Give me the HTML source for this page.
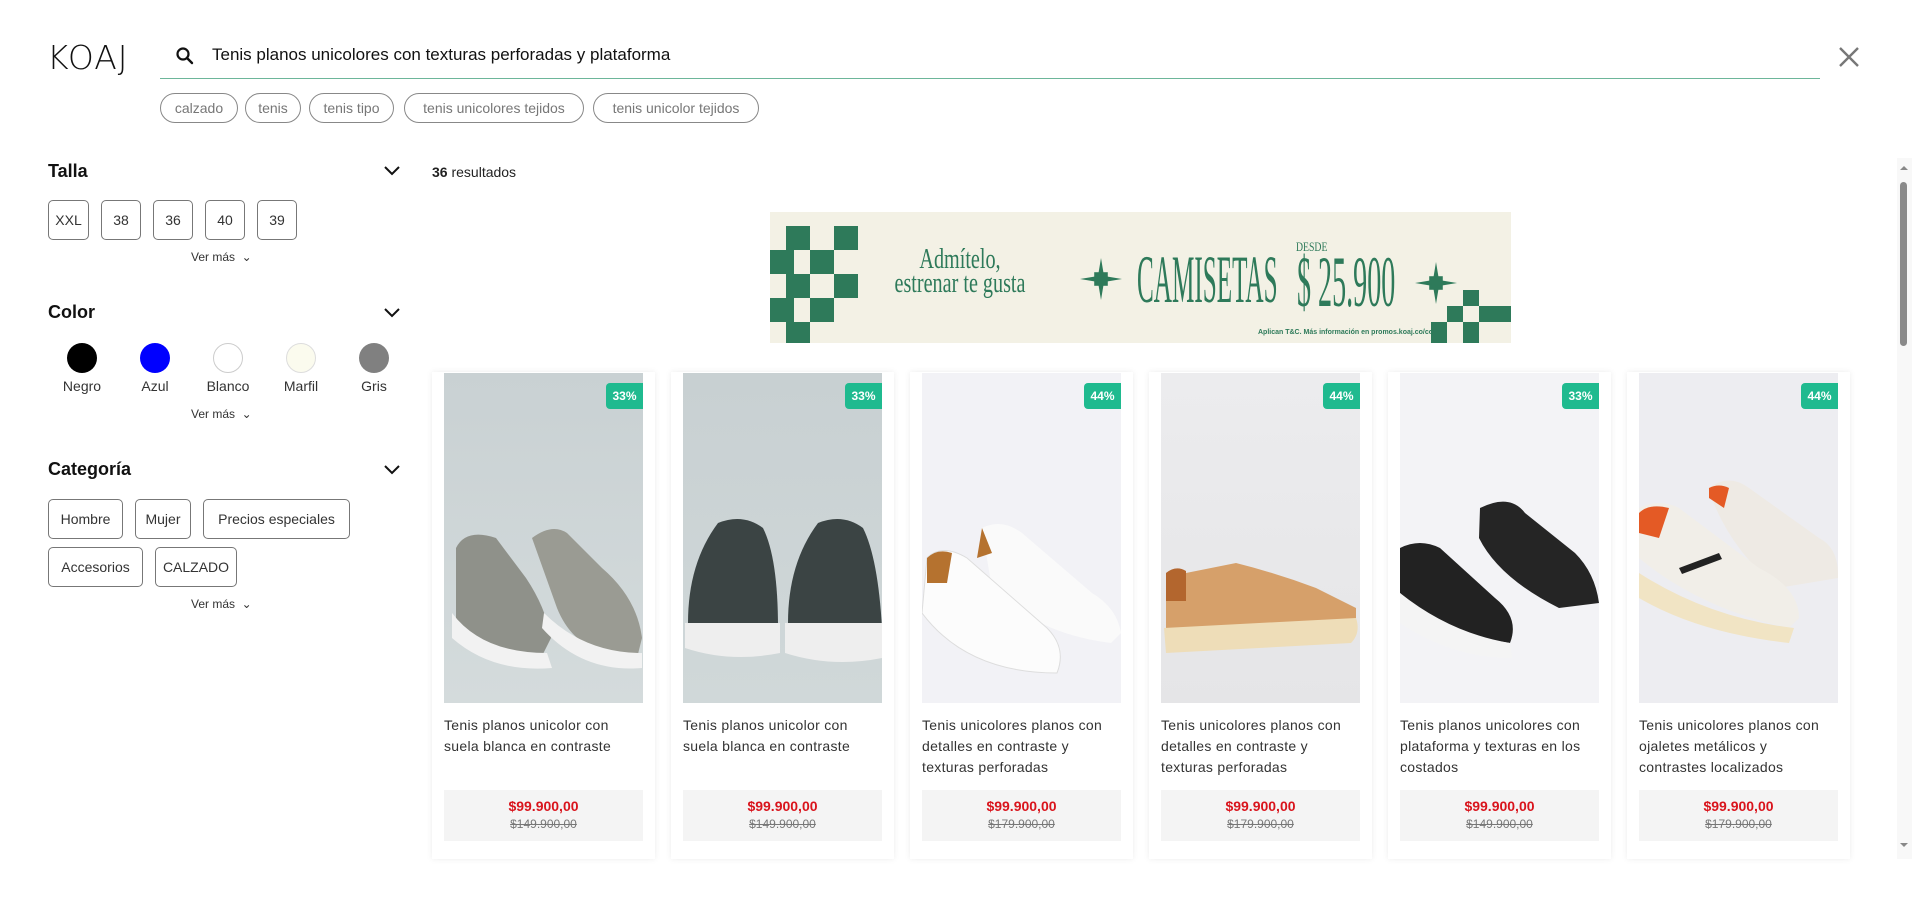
<!DOCTYPE html>
<html><head><meta charset="utf-8"><style>
*{box-sizing:border-box;margin:0;padding:0}
body{width:1912px;height:919px;overflow:hidden;background:#fff;font-family:"Liberation Sans",sans-serif;color:#222;position:relative}
.a{position:absolute}
.logo{left:47px;top:38px;font-size:33px;letter-spacing:1px;color:#111;font-family:"DejaVu Sans","Liberation Sans",sans-serif;font-weight:200}
.q{left:212px;top:45px;font-size:17px;color:#111}
.line{left:160px;top:78px;width:1660px;height:1px;background:#6db69a}
.chip{top:93px;height:30px;border:1px solid #888;border-radius:15px;font-size:14px;color:#777;display:flex;align-items:center;justify-content:center}
h3{position:absolute;left:48px;font-size:18px;font-weight:700;color:#111}
.chev{position:absolute;left:384px}
.box{position:absolute;height:40px;border:1px solid #777;border-radius:5px;font-size:14px;color:#333;display:flex;align-items:center;justify-content:center}
.vm{position:absolute;left:191px;font-size:12px;color:#333}
.dot{position:absolute;width:30px;height:30px;border-radius:50%}
.cl{position:absolute;font-size:14px;color:#333;width:80px;text-align:center}
.card{position:absolute;top:372px;width:223px;height:487px;background:#fff;box-shadow:0 0 6px rgba(0,0,0,.08)}
.img{position:absolute;left:12px;top:1px;width:199px;height:330px;overflow:hidden}
.badge{position:absolute;right:0;top:10px;width:37px;height:26px;background:#1fba8f;color:#fff;font-weight:700;font-size:12px;border-radius:4px 0 0 4px;display:flex;align-items:center;justify-content:center}
.t{position:absolute;left:12px;top:343px;width:199px;font-size:14px;line-height:21px;color:#333;letter-spacing:.3px}
.pr{position:absolute;left:12px;top:418px;width:199px;height:51px;background:#f4f4f4;text-align:center}
.p1{color:#d9141c;font-weight:700;font-size:14px;margin-top:8px}
.p2{color:#777;font-size:12px;text-decoration:line-through;margin-top:3px}
.bn{left:770px;top:212px;width:741px;height:131px;background:#f3f1e5;overflow:hidden}
.g{position:absolute;background:#2e7a5a;width:24px;height:24px}
.bt{position:absolute;color:#2e7a5a;font-family:"Liberation Serif",serif;line-height:1;white-space:nowrap}
</style></head><body>
<div class="a logo">KOAJ</div>
<svg class="a" style="left:175px;top:46px" width="20" height="20" viewBox="0 0 20 20"><circle cx="8" cy="8" r="5.5" fill="none" stroke="#111" stroke-width="2.2"/><path d="M12 12l5 5" stroke="#111" stroke-width="2.4" stroke-linecap="round"/></svg>
<div class="a q">Tenis planos unicolores con texturas perforadas y plataforma</div>
<div class="a line"></div>
<svg class="a" style="left:1838px;top:46px" width="22" height="22" viewBox="0 0 22 22"><path d="M2 2L20 20M20 2L2 20" stroke="#777" stroke-width="2.4"/></svg>
<div class="a chip" style="left:160px;width:78px">calzado</div>
<div class="a chip" style="left:245px;width:56px">tenis</div>
<div class="a chip" style="left:309px;width:85px">tenis tipo</div>
<div class="a chip" style="left:404px;width:180px">tenis unicolores tejidos</div>
<div class="a chip" style="left:593px;width:166px">tenis unicolor tejidos</div>

<h3 style="top:161px">Talla</h3>
<svg class="chev" style="top:164px" width="16" height="12" viewBox="0 0 16 12"><path d="M1 3l7 7 7-7" fill="none" stroke="#111" stroke-width="2"/></svg>
<div class="box" style="left:48px;top:200px;width:41px">XXL</div>
<div class="box" style="left:101px;top:200px;width:40px">38</div>
<div class="box" style="left:153px;top:200px;width:40px">36</div>
<div class="box" style="left:205px;top:200px;width:40px">40</div>
<div class="box" style="left:257px;top:200px;width:40px">39</div>
<div class="vm" style="top:250px">Ver más &nbsp;⌄</div>

<h3 style="top:302px">Color</h3>
<svg class="chev" style="top:306px" width="16" height="12" viewBox="0 0 16 12"><path d="M1 3l7 7 7-7" fill="none" stroke="#111" stroke-width="2"/></svg>
<div class="dot" style="left:67px;top:343px;background:#000"></div>
<div class="dot" style="left:140px;top:343px;background:#00f"></div>
<div class="dot" style="left:213px;top:343px;background:#fff;border:1px solid #ccc"></div>
<div class="dot" style="left:286px;top:343px;background:#fbfbee;border:1px solid #ddd"></div>
<div class="dot" style="left:359px;top:343px;background:#808080"></div>
<div class="cl" style="left:42px;top:378px">Negro</div>
<div class="cl" style="left:115px;top:378px">Azul</div>
<div class="cl" style="left:188px;top:378px">Blanco</div>
<div class="cl" style="left:261px;top:378px">Marfil</div>
<div class="cl" style="left:334px;top:378px">Gris</div>
<div class="vm" style="top:407px">Ver más &nbsp;⌄</div>

<h3 style="top:459px">Categoría</h3>
<svg class="chev" style="top:463px" width="16" height="12" viewBox="0 0 16 12"><path d="M1 3l7 7 7-7" fill="none" stroke="#111" stroke-width="2"/></svg>
<div class="box" style="left:48px;top:499px;width:75px">Hombre</div>
<div class="box" style="left:135px;top:499px;width:56px">Mujer</div>
<div class="box" style="left:203px;top:499px;width:147px">Precios especiales</div>
<div class="box" style="left:48px;top:547px;width:95px">Accesorios</div>
<div class="box" style="left:155px;top:547px;width:82px">CALZADO</div>
<div class="vm" style="top:597px">Ver más &nbsp;⌄</div>

<div class="a" style="left:432px;top:164px;font-size:14px"><b>36</b> resultados</div>

<div class="a bn">
<div class="g" style="left:16px;top:14px"></div><div class="g" style="left:64px;top:14px"></div>
<div class="g" style="left:0;top:38px"></div><div class="g" style="left:40px;top:38px"></div>
<div class="g" style="left:16px;top:62px"></div><div class="g" style="left:64px;top:62px"></div>
<div class="g" style="left:0;top:86px"></div><div class="g" style="left:40px;top:86px"></div>
<div class="g" style="left:16px;top:110px"></div>
<div class="g" style="left:693px;top:78px;width:16px;height:16px"></div>
<div class="g" style="left:677px;top:94px;width:16px;height:16px"></div><div class="g" style="left:709px;top:94px;width:32px;height:16px"></div>
<div class="g" style="left:661px;top:110px;width:16px;height:21px"></div><div class="g" style="left:693px;top:110px;width:16px;height:21px"></div>
<div class="bt" style="left:60px;top:36px;width:260px;text-align:center;font-size:28px;line-height:24px;transform:scaleX(.72);transform-origin:center">Admítelo,<br>estrenar te gusta</div>
<svg class="a" style="left:310px;top:46px" width="42" height="42" viewBox="-21 -21 42 42"><path d="M0-21L3-3 21 0 3 3 0 21-3 3-21 0-3-3Z" fill="#2e7a5a"/><path d="M0-8L8 0 0 8-8 0Z" fill="#2e7a5a" transform="rotate(45) scale(1.2)"/></svg>
<div class="bt" style="left:367px;top:33px;font-size:68px;transform:scaleX(.37);transform-origin:left">CAMISETAS</div>
<div class="bt" style="left:526px;top:28px;font-size:13px;transform:scaleX(.75);transform-origin:left">DESDE</div>
<div class="bt" style="left:527px;top:34px;font-size:72px;transform:scaleX(.39);transform-origin:left">$ 25.900</div>
<svg class="a" style="left:645px;top:50px" width="42" height="42" viewBox="-21 -21 42 42"><path d="M0-21L3-3 21 0 3 3 0 21-3 3-21 0-3-3Z" fill="#2e7a5a"/><path d="M0-8L8 0 0 8-8 0Z" fill="#2e7a5a" transform="rotate(45) scale(1.2)"/></svg>
<div class="bt" style="left:488px;top:117px;font-size:7px;font-family:'Liberation Sans',sans-serif;font-weight:700">Aplican T&amp;C. Más información en promos.koaj.co/col/</div>
</div>

<!-- cards -->
<div class="card" style="left:432px"><div class="img" style="background:linear-gradient(#c9d1d3,#d4dbdc)"><svg width="199" height="330"><path d="M12 175q10-20 40-10l30 40q20 30 25 60l-10 20q-60 0-85-40z" fill="#8f918a"/><path d="M8 240q30 40 95 40l5 15q-60 5-100-30z" fill="#f2f2f2"/><path d="M88 165q20-15 35-5l35 35q35 30 40 70l-5 20q-60 0-80-50z" fill="#9a9b93"/><path d="M100 240q40 40 98 40v15q-60 5-100-40z" fill="#f2f2f2"/></svg><div class="badge">33%</div></div>
<div class="t">Tenis planos unicolor con suela blanca en contraste</div><div class="pr"><div class="p1">$99.900,00</div><div class="p2">$149.900,00</div></div></div>

<div class="card" style="left:671px"><div class="img" style="background:linear-gradient(#c8d0d2,#d0d8d9)"><svg width="199" height="330"><path d="M5 250q0-60 30-100 25-10 45 5 15 30 15 100z" fill="#3b4444"/><path d="M2 250h95v30q-50 10-95-5z" fill="#eee"/><path d="M105 250q0-60 30-100 25-10 45 5 15 30 19 100z" fill="#3b4444"/><path d="M102 250h97v35q-50 10-97-5z" fill="#eee"/></svg><div class="badge">33%</div></div>
<div class="t">Tenis planos unicolor con suela blanca en contraste</div><div class="pr"><div class="p1">$99.900,00</div><div class="p2">$149.900,00</div></div></div>

<div class="card" style="left:910px"><div class="img" style="background:#f2f2f6"><svg width="199" height="330"><path d="M60 155q20-10 40 5l70 60q25 15 29 40l-10 10q-80-10-120-60z" fill="#fafafa"/><path d="M60 155l10 25-15 5z" fill="#b5722f"/><path d="M5 185q15-15 40 0l80 70q20 20 10 45q-90 0-135-60z" fill="#fcfcfc" stroke="#ddd"/><path d="M5 185q10-10 25-5l-5 30-20 0z" fill="#b5722f"/></svg><div class="badge">44%</div></div>
<div class="t">Tenis unicolores planos con detalles en contraste y texturas perforadas</div><div class="pr"><div class="p1">$99.900,00</div><div class="p2">$179.900,00</div></div></div>

<div class="card" style="left:1149px"><div class="img" style="background:linear-gradient(#ececee,#e5e5e7)"><svg width="199" height="330"><path d="M5 200q10-5 20 0l50-10q40 10 80 25l40 20v20l-190 10z" fill="#d6a06a"/><path d="M5 200q10-8 20-2v30h-20z" fill="#b3662e"/><path d="M3 255l192-10q5 15-5 25l-185 10z" fill="#eeddb8"/></svg><div class="badge">44%</div></div>
<div class="t">Tenis unicolores planos con detalles en contraste y texturas perforadas</div><div class="pr"><div class="p1">$99.900,00</div><div class="p2">$179.900,00</div></div></div>

<div class="card" style="left:1388px"><div class="img" style="background:#f3f3f6"><svg width="199" height="330"><path d="M80 135q30-15 45 5l50 40q20 20 24 50l-40 5q-60-30-80-70z" fill="#252525"/><path d="M0 175q20-10 40 0l55 50q25 20 15 45q-70-10-110-50z" fill="#222"/><path d="M0 220q50 40 110 50l2 15q-60 0-112-35z" fill="#f4f4f4"/></svg><div class="badge">33%</div></div>
<div class="t">Tenis planos unicolores con plataforma y texturas en los costados</div><div class="pr"><div class="p1">$99.900,00</div><div class="p2">$149.900,00</div></div></div>

<div class="card" style="left:1627px"><div class="img" style="background:#ededf1"><svg width="199" height="330"><path d="M70 115q20-15 40 0l70 50q20 10 19 40l-60 10q-50-40-70-100z" fill="#eeeae4"/><path d="M70 115q10-5 20 0l-5 20-15 -10z" fill="#e45a25"/><path d="M0 135q20-10 40 0l80 60q40 20 40 50l-10 10q-90-20-150-70z" fill="#f1eee8"/><path d="M0 140q10-10 30-5l-10 30-20-5z" fill="#e45a25"/><path d="M0 200q70 45 155 55l-5 15q-90-10-150-45z" fill="#f1e4c4"/><path d="M40 195l40-15 3 6-40 15z" fill="#222"/></svg><div class="badge">44%</div></div>
<div class="t">Tenis unicolores planos con ojaletes metálicos y contrastes localizados</div><div class="pr"><div class="p1">$99.900,00</div><div class="p2">$179.900,00</div></div></div>

<!-- scrollbar -->
<div class="a" style="left:1897px;top:158px;width:15px;height:701px;background:#f8f8f8"></div>
<div class="a" style="left:1900px;top:166px;width:0;height:0;border-left:4px solid transparent;border-right:4px solid transparent;border-bottom:4px solid #888"></div>
<div class="a" style="left:1900px;top:182px;width:7px;height:164px;background:#8a8a8a;border-radius:4px"></div>
<div class="a" style="left:1900px;top:843px;width:0;height:0;border-left:4px solid transparent;border-right:4px solid transparent;border-top:4px solid #888"></div>
</body></html>
